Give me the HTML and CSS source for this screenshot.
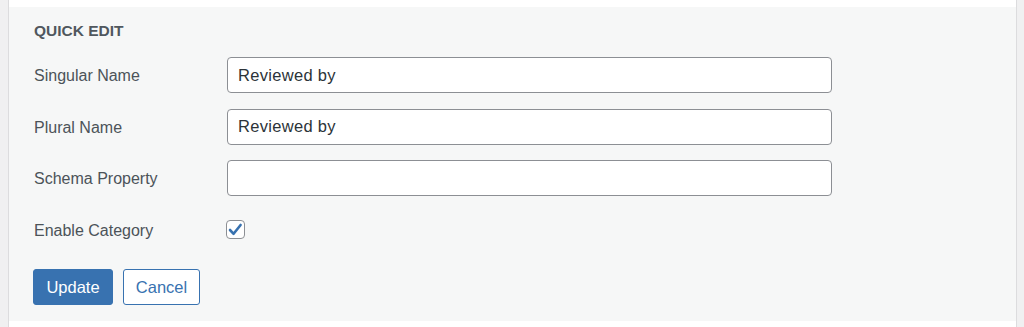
FILE: index.html
```html
<!DOCTYPE html>
<html lang="en">
<head>
  <meta charset="UTF-8" />
  <title>Quick Edit</title>
  <link rel="stylesheet" href="styles.css">
</head>
<body>
  <div class="list-table">
    <div class="row-spacer"></div>

    <!-- Quick edit row -->
    <div class="quick-edit">
      <h3 class="qe-title">Quick Edit</h3>

      <div class="qe-field">
        <label for="singular-name">Singular Name</label>
        <input type="text" id="singular-name" value="Reviewed by">
      </div>

      <div class="qe-field">
        <label for="plural-name">Plural Name</label>
        <input type="text" id="plural-name" value="Reviewed by">
      </div>

      <div class="qe-field">
        <label for="schema-property">Schema Property</label>
        <input type="text" id="schema-property" value="">
      </div>

      <div class="qe-field">
        <label>Enable Category</label>
        <span class="checkbox">
          <svg width="19" height="19" viewBox="0 0 19 19">
            <path d="M4 10 L7.6 13.8 L14.6 5" fill="none" stroke="#3872b0" stroke-width="2.6" stroke-linecap="round" stroke-linejoin="round"/>
          </svg>
        </span>
      </div>

      <div class="qe-actions">
        <button class="btn btn-primary">Update</button>
        <button class="btn btn-secondary">Cancel</button>
      </div>
    </div>

    <div class="row-spacer"></div>
  </div>
</body>
</html>
```

FILE: styles.css
```css
* {
  margin: 0;
  padding: 0;
  box-sizing: border-box;
}

body {
  font-family: 'Liberation Sans', Arial, sans-serif;
  background-color: #f0f0f1;
}

.list-table {
  margin-left: 8px;
  width: 1009px;
  border-left: 1px solid #dcdcde;
  border-right: 1px solid #dcdcde;
  background: #fff;
}

.row-spacer {
  height: 7px;
  background: #fff;
}

.quick-edit {
  background: #f6f7f7;
  padding: 14px 25px 16px;
}

.qe-title {
  font-size: 15.5px;
  line-height: 20px;
  font-weight: bold;
  text-transform: uppercase;
  color: #50575e;
  margin-bottom: 16px;
}

.qe-field {
  display: flex;
  align-items: center;
  height: 36px;
  margin-bottom: 15.5px;
}

.qe-field label {
  width: 193px;
  padding-top: 2px;
  font-size: 16px;
  color: #4c5359;
}

.qe-field input {
  width: 605px;
  height: 36px;
  padding: 0 10px;
  border: 1px solid #8c8f94;
  border-radius: 4px;
  background: #fff;
  font-family: 'Liberation Sans', Arial, sans-serif;
  font-size: 16.5px;
  letter-spacing: 0.3px;
  color: #2c3338;
}

.checkbox {
  display: flex;
  width: 19px;
  height: 19px;
  margin-left: -1px;
  border: 1px solid #8c8f94;
  border-radius: 4px;
  background: #fff;
}

.checkbox svg {
  margin: -1px;
}

.qe-actions {
  display: flex;
  gap: 10px;
  padding-top: 6px;
  margin-left: -1px;
}

.btn {
  height: 36px;
  padding: 0 10px;
  border-radius: 3px;
  font-family: 'Liberation Sans', Arial, sans-serif;
  font-size: 16.5px;
  cursor: pointer;
}

.btn-primary {
  width: 80px;
  background-color: #3872b0;
  border: 1px solid #3872b0;
  color: #fff;
}

.btn-secondary {
  width: 77px;
  background-color: #fff;
  border: 1px solid #3872b0;
  color: #3872b0;
}
```
